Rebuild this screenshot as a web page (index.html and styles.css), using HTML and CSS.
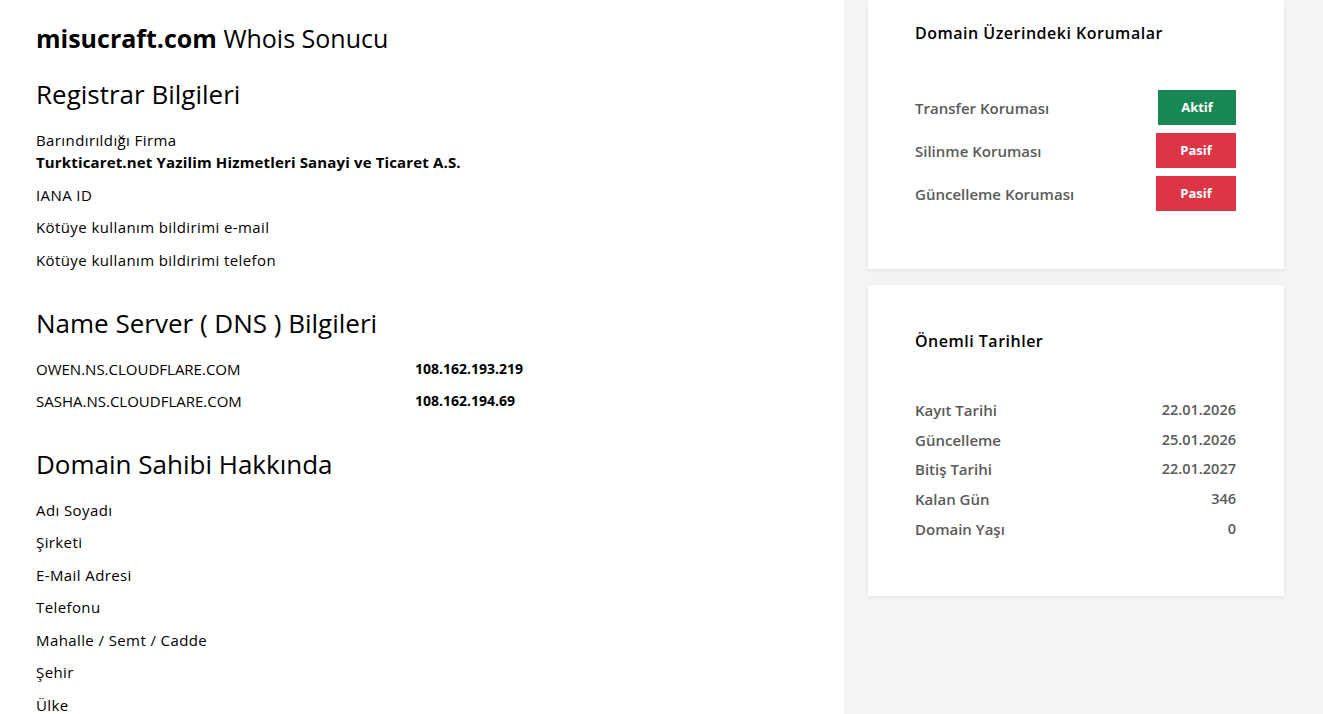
FILE: index.html
```html
<!DOCTYPE html>
<html lang="tr">
<head>
    <meta charset="UTF-8">
    <meta name="viewport" content="width=device-width, initial-scale=1.0">
    <title>misucraft.com Whois Sonucu</title>
    <link rel="stylesheet" href="styles.css">
</head>
<body>
    <div class="page">
        <main class="main">
            <h1 class="page-title"><strong>misucraft.com</strong> Whois Sonucu</h1>

            <section class="block">
                <h2 class="block-title">Registrar Bilgileri</h2>
                <div class="info-item">
                    <div>Barındırıldığı Firma</div>
                    <div class="value">Turkticaret.net Yazilim Hizmetleri Sanayi ve Ticaret A.S.</div>
                </div>
                <div class="info-item">IANA ID</div>
                <div class="info-item">Kötüye kullanım bildirimi e-mail</div>
                <div class="info-item">Kötüye kullanım bildirimi telefon</div>
            </section>

            <section class="block">
                <h2 class="block-title">Name Server ( DNS ) Bilgileri</h2>
                <div class="ns-row">
                    <span class="ns-name">OWEN.NS.CLOUDFLARE.COM</span>
                    <span class="ns-ip">108.162.193.219</span>
                </div>
                <div class="ns-row">
                    <span class="ns-name">SASHA.NS.CLOUDFLARE.COM</span>
                    <span class="ns-ip">108.162.194.69</span>
                </div>
            </section>

            <section class="block">
                <h2 class="block-title">Domain Sahibi Hakkında</h2>
                <div class="info-item">Adı Soyadı</div>
                <div class="info-item">Şirketi</div>
                <div class="info-item">E-Mail Adresi</div>
                <div class="info-item">Telefonu</div>
                <div class="info-item">Mahalle / Semt / Cadde</div>
                <div class="info-item">Şehir</div>
                <div class="info-item">Ülke</div>
            </section>
        </main>

        <aside class="sidebar">
            <div class="card card-protect">
                <h3 class="card-title">Domain Üzerindeki Korumalar</h3>
                <div class="card-rows">
                    <div class="row">
                        <span>Transfer Koruması</span>
                        <span class="badge badge-on">Aktif</span>
                    </div>
                    <div class="row">
                        <span>Silinme Koruması</span>
                        <span class="badge badge-off">Pasif</span>
                    </div>
                    <div class="row">
                        <span>Güncelleme Koruması</span>
                        <span class="badge badge-off">Pasif</span>
                    </div>
                </div>
            </div>

            <div class="card card-dates">
                <h3 class="card-title">Önemli Tarihler</h3>
                <div class="card-rows">
                    <div class="row"><span>Kayıt Tarihi</span><span class="date">22.01.2026</span></div>
                    <div class="row"><span>Güncelleme</span><span class="date">25.01.2026</span></div>
                    <div class="row"><span>Bitiş Tarihi</span><span class="date">22.01.2027</span></div>
                    <div class="row"><span>Kalan Gün</span><span class="date">346</span></div>
                    <div class="row"><span>Domain Yaşı</span><span class="date">0</span></div>
                </div>
            </div>
        </aside>
    </div>
</body>
</html>
```

FILE: styles.css
```css
/* CSS */
body {
    margin: 0;
    font-family: "Open Sans", "DejaVu Sans", sans-serif;
    color: #000;
    background: #fff;
}

.page {
    display: flex;
    min-height: 714px;
}

.main {
    width: 844px;
    padding: 20px 36px 0;
    box-sizing: border-box;
    background: #fff;
}

.page-title {
    margin: 0 0 22px;
    font-size: 25px;
    font-weight: 400;
    line-height: 36px;
}

.page-title strong {
    font-weight: 700;
}

.block {
    margin-bottom: 36px;
}

.block-title {
    margin: 0 0 19px;
    font-size: 26px;
    font-weight: 400;
    line-height: 32px;
}

.info-item {
    font-size: 15px;
    letter-spacing: 0.4px;
    line-height: 22px;
    margin-bottom: 10.5px;
}

.value {
    font-weight: 700;
    letter-spacing: 0.15px;
}

.ns-row {
    display: flex;
    font-size: 15px;
    line-height: 22px;
    margin-bottom: 10px;
}

.ns-name {
    width: 379px;
}

.ns-ip {
    font-size: 14px;
    font-weight: 700;
}

.sidebar {
    flex: 1;
    background: #f4f4f4;
    padding: 0 39px 0 24px;
}

.card {
    background: #fff;
    box-shadow: 0 1px 4px rgba(0, 0, 0, 0.08);
    padding: 0 48px 0 47px;
    margin-bottom: 16px;
}

.card-protect {
    padding-top: 22px;
    height: 247px;
}

.card-dates {
    padding-top: 45px;
    height: 266px;
}

.card-title {
    margin: 0;
    font-size: 16px;
    letter-spacing: 0.5px;
    font-weight: 600;
    line-height: 22px;
}

.card-rows {
    margin-top: 47px;
}

.card-protect .card-rows {
    margin-top: 46px;
}

.row {
    display: flex;
    justify-content: space-between;
    align-items: center;
    font-size: 15px;
    font-weight: 600;
    color: #5a5a5a;
    line-height: 22px;
    margin-bottom: 7.7px;
}

.card-protect .row {
    margin-bottom: 8px;
}

.date {
    font-size: 14.5px;
}

.badge {
    display: inline-block;
    height: 35px;
    line-height: 35px;
    width: 80px;
    text-align: center;
    color: #fff;
    font-size: 13px;
    font-weight: 700;
}

.badge-on {
    background: #198754;
    width: 78px;
}

.badge-off {
    background: #dc3545;
}
```
